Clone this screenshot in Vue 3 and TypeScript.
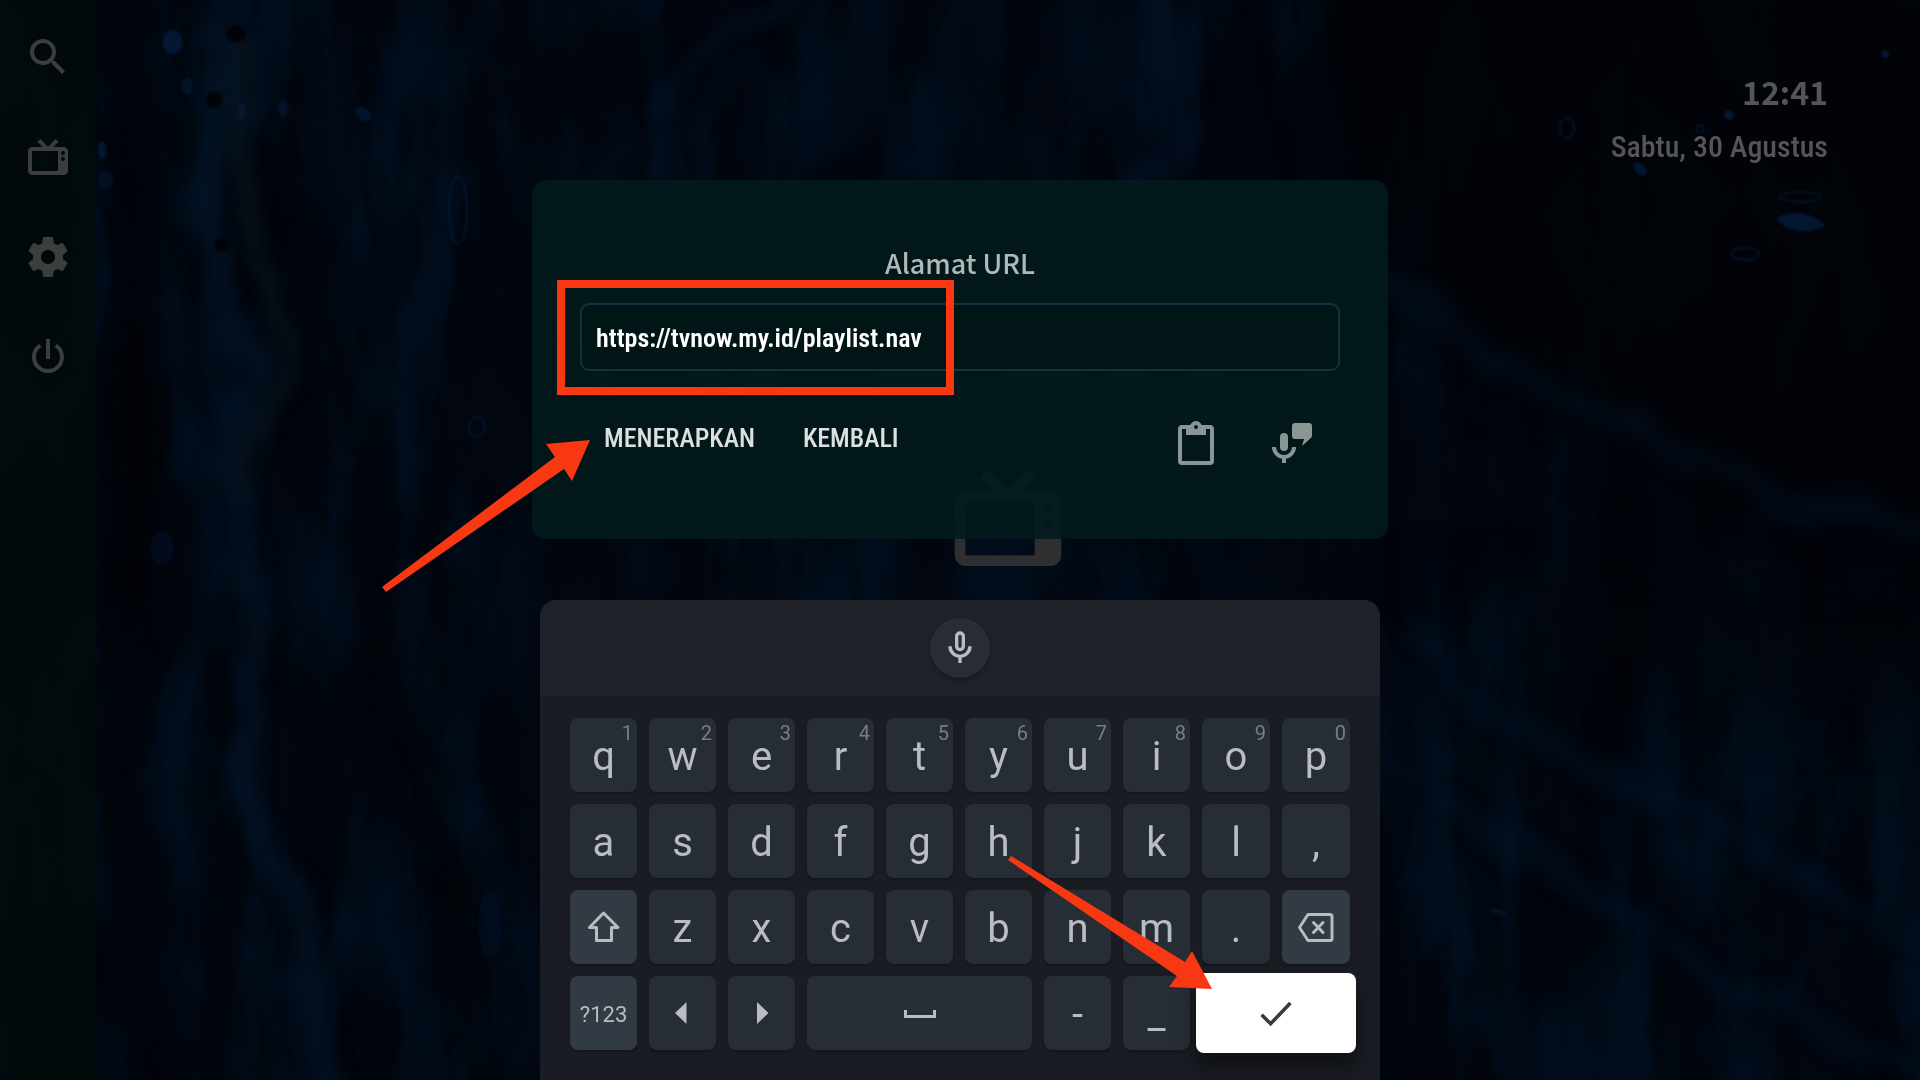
<script setup lang="ts">
import { ref } from 'vue'

interface Key {
  id: string
  label?: string
  hint?: string
  icon?: 'shift' | 'backspace' | 'left' | 'right' | 'space' | 'enter'
  name?: string
  special?: boolean
  small?: boolean
}

const url = ref('https://tvnow.my.id/playlist.nav')

const letters = (text: string): Key[] => text.split('').map((c) => ({ id: c, label: c }))

const keys: Key[] = [
  ...'qwertyuiop'.split('').map((c, i) => ({ id: c, label: c, hint: String((i + 1) % 10) })),
  ...letters('asdfghjkl,'),
  { id: 'shift', icon: 'shift', name: 'Shift', special: true },
  ...letters('zxcvbnm.'),
  { id: 'backspace', icon: 'backspace', name: 'Hapus', special: true },
  { id: 'symbols', label: '?123', special: true, small: true },
  { id: 'left', icon: 'left', name: 'Kiri' },
  { id: 'right', icon: 'right', name: 'Kanan' },
  { id: 'space', icon: 'space', name: 'Spasi' },
  { id: 'dash', label: '-' },
  { id: 'underscore', label: '_' },
  { id: 'enter', icon: 'enter', name: 'Selesai' },
]

const tvPath =
  'M8.16,3L6.75,4.41L9.34,7H4C2.89,7 2,7.89 2,9V19C2,20.11 2.89,21 4,21H20C21.11,21 22,20.11 22,19V9C22,7.89 21.11,7 20,7H14.66L17.25,4.41L15.84,3L12,6.84L8.16,3M4,9H17V19H4V9M19.5,9A1,1 0 0,1 20.5,10A1,1 0 0,1 19.5,11A1,1 0 0,1 18.5,10A1,1 0 0,1 19.5,9M19.5,12A1,1 0 0,1 20.5,13A1,1 0 0,1 19.5,14A1,1 0 0,1 18.5,13A1,1 0 0,1 19.5,12Z'

const menu = [
  {
    name: 'Cari',
    path: 'M9.5,3A6.5,6.5 0 0,1 16,9.5C16,11.11 15.41,12.59 14.44,13.73L14.71,14H15.5L20.5,19L19,20.5L14,15.5V14.71L13.73,14.44C12.59,15.41 11.11,16 9.5,16A6.5,6.5 0 0,1 3,9.5A6.5,6.5 0 0,1 9.5,3M9.5,5C7,5 5,7 5,9.5C5,12 7,14 9.5,14C12,14 14,12 14,9.5C14,7 12,5 9.5,5Z',
  },
  { name: 'TV', path: tvPath },
  {
    name: 'Pengaturan',
    path: 'M12,15.5A3.5,3.5 0 0,1 8.5,12A3.5,3.5 0 0,1 12,8.5A3.5,3.5 0 0,1 15.5,12A3.5,3.5 0 0,1 12,15.5M19.43,12.97C19.47,12.65 19.5,12.33 19.5,12C19.5,11.67 19.47,11.34 19.43,11L21.54,9.37C21.73,9.22 21.78,8.95 21.66,8.73L19.66,5.27C19.54,5.05 19.27,4.96 19.05,5.05L16.56,6.05C16.04,5.66 15.5,5.32 14.87,5.07L14.5,2.42C14.46,2.18 14.25,2 14,2H10C9.75,2 9.54,2.18 9.5,2.42L9.13,5.07C8.5,5.32 7.96,5.66 7.44,6.05L4.95,5.05C4.73,4.96 4.46,5.05 4.34,5.27L2.34,8.73C2.21,8.95 2.27,9.22 2.46,9.37L4.57,11C4.53,11.34 4.5,11.67 4.5,12C4.5,12.33 4.53,12.65 4.57,12.97L2.46,14.63C2.27,14.78 2.21,15.05 2.34,15.27L4.34,18.73C4.46,18.95 4.73,19.03 4.95,18.95L7.44,17.94C7.96,18.34 8.5,18.68 9.13,18.93L9.5,21.58C9.54,21.82 9.75,22 10,22H14C14.25,22 14.46,21.82 14.5,21.58L14.87,18.93C15.5,18.67 16.04,18.34 16.56,17.94L19.05,18.95C19.27,19.03 19.54,18.95 19.66,18.73L21.66,15.27C21.78,15.05 21.73,14.78 21.54,14.63L19.43,12.97Z',
  },
  {
    name: 'Keluar',
    path: 'M16.56,5.44L15.11,6.89C16.84,7.94 18,9.83 18,12A6,6 0 0,1 12,18A6,6 0 0,1 6,12C6,9.83 7.16,7.94 8.88,6.88L7.44,5.44C5.36,6.88 4,9.28 4,12A8,8 0 0,0 12,20A8,8 0 0,0 20,12C20,9.28 18.64,6.88 16.56,5.44M13,3H11V13H13',
  },
]
</script>

<template>
  <div class="screen">
    <svg class="wallpaper" viewBox="0 0 1920 1080" preserveAspectRatio="xMidYMid slice" aria-hidden="true">
      <defs>
        <filter id="marble" x="0" y="0" width="100%" height="100%" color-interpolation-filters="sRGB">
          <feTurbulence type="fractalNoise" baseFrequency="0.009 0.003" numOctaves="6" seed="14" />
          <feColorMatrix values="0 0 0 0 0.006  0 0 0 0 0.075  0 0 0 0 0.15  4 0 0 0 -1.5" />
        </filter>
        <filter id="veins" x="0" y="0" width="100%" height="100%" color-interpolation-filters="sRGB">
          <feTurbulence type="fractalNoise" baseFrequency="0.02 0.006" numOctaves="5" seed="5" />
          <feColorMatrix values="0 0 0 0 0.004  0 0 0 0 0.012  0 0 0 0 0.024  0 6 0 0 -2.7" />
        </filter>
        <filter id="warp" x="-10%" y="-10%" width="120%" height="120%" color-interpolation-filters="sRGB">
          <feTurbulence type="fractalNoise" baseFrequency="0.012" numOctaves="4" seed="8" />
          <feDisplacementMap in="SourceGraphic" scale="60" xChannelSelector="R" yChannelSelector="G" />
          <feGaussianBlur stdDeviation="8" />
        </filter>
        <filter id="soft" color-interpolation-filters="sRGB"><feGaussianBlur stdDeviation="1" /></filter>
        <filter id="haze" x="-20%" y="-20%" width="140%" height="140%" color-interpolation-filters="sRGB">
          <feGaussianBlur stdDeviation="30" />
        </filter>
      </defs>
      <rect width="1920" height="1080" fill="#02060f" />
      <rect width="1920" height="1080" filter="url(#marble)" opacity="0.55" />
      <rect width="1920" height="1080" filter="url(#veins)" opacity="0.5" />
      <g filter="url(#warp)" fill="none">
        <path d="M130 -20C150 200 110 330 150 480S90 700 130 840S120 1000 170 1100" stroke="#010409" stroke-width="56" opacity="0.85" />
        <path d="M225 -20C215 90 190 170 205 240S260 330 240 420S270 620 250 720S310 900 330 1100" stroke="#04162a" stroke-width="30" opacity="0.6" />
        <path d="M300 60C280 220 330 300 350 420S320 600 400 700S430 900 480 1100" stroke="#010409" stroke-width="22" opacity="0.8" />
        <path d="M245 40C230 110 240 220 275 300S240 440 250 500" stroke="#081720" stroke-width="20" opacity="0.7" />
        <path d="M780 -20C760 60 690 30 670 100" stroke="#04162c" stroke-width="10" opacity="0.7" />
        <path d="M1150 -20C1170 80 1220 160 1130 190" stroke="#04162c" stroke-width="30" opacity="0.4" />
      </g>
      <path d="M1290 -60H1980V560L1740 540L1560 420L1380 300Z" fill="#020408" opacity="0.9" filter="url(#haze)" />
      <path d="M1400 560L1980 600V740L1600 690Z" fill="#020408" opacity="0.5" filter="url(#haze)" />
      <g filter="url(#warp)" fill="none" stroke="#03152a" stroke-width="24" opacity="0.4">
        <path d="M1340 250C1430 330 1540 380 1640 430S1820 510 1940 530" />
        <path d="M1410 620C1480 740 1620 780 1760 850S1880 940 1940 960" />
        <path d="M1430 800C1530 830 1610 930 1740 990S1870 1050 1940 1080" />
      </g>
      <g fill="#052043" opacity="0.7" filter="url(#soft)">
        <path d="M1776 219C1788 209 1810 211 1826 225C1810 235 1790 234 1776 219Z" />
        <ellipse cx="1640" cy="169" rx="8" ry="5" transform="rotate(40 1640 169)" />
        <circle cx="1729" cy="115" r="5" />
        <ellipse cx="173" cy="42" rx="10" ry="12" />
        <ellipse cx="187" cy="86" rx="6" ry="9" opacity="0.7" />
        <ellipse cx="242" cy="111" rx="4" ry="9" opacity="0.7" />
        <ellipse cx="283" cy="108" rx="5" ry="8" opacity="0.7" />
        <ellipse cx="363" cy="114" rx="9" ry="6" transform="rotate(30 363 114)" opacity="0.8" />
        <ellipse cx="106" cy="180" rx="8" ry="10" opacity="0.5" />
        <ellipse cx="102" cy="150" rx="4" ry="9" />
        <ellipse cx="162" cy="548" rx="12" ry="18" opacity="0.4" />
        <ellipse cx="490" cy="925" rx="12" ry="34" opacity="0.3" />
        <ellipse cx="1498" cy="912" rx="10" ry="3" transform="rotate(20 1498 912)" opacity="0.6" />
        <circle cx="1885" cy="54" r="4" />
      </g>
      <g fill="none" stroke="#052043" stroke-width="2" opacity="0.6" filter="url(#soft)">
        <ellipse cx="458" cy="210" rx="9" ry="34" />
        <ellipse cx="477" cy="427" rx="8" ry="10" />
        <ellipse cx="1800" cy="197" rx="20" ry="5" />
        <ellipse cx="1567" cy="128" rx="7" ry="10" />
        <circle cx="1700" cy="129" r="4" />
        <ellipse cx="1745" cy="254" rx="14" ry="6" />
      </g>
      <g fill="#010306" filter="url(#soft)">
        <ellipse cx="236" cy="34" rx="10" ry="8" />
        <ellipse cx="214" cy="100" rx="8" ry="8" />
        <ellipse cx="222" cy="245" rx="8" ry="6" />
      </g>
    </svg>

    <nav class="sidebar" aria-label="Menu">
      <button v-for="item in menu" :key="item.name" class="menu-button" type="button" :aria-label="item.name">
        <svg viewBox="0 0 24 24"><path :d="item.path" fill="currentColor" fill-rule="evenodd" /></svg>
      </button>
    </nav>

    <main class="home">
      <header class="clock">
        <time class="time">12:41</time>
        <span class="date">Sabtu, 30 Agustus</span>
      </header>
      <svg class="home-logo" viewBox="0 0 24 24" aria-hidden="true">
        <path :d="tvPath" fill="currentColor" fill-rule="evenodd" />
      </svg>
    </main>

    <div class="overlay">
      <form class="dialog" @submit.prevent>
        <label class="title" for="url">Alamat URL</label>
        <div class="field">
          <input id="url" v-model="url" class="url-input" type="text" spellcheck="false" />
          <span class="highlight" aria-hidden="true"></span>
        </div>
        <div class="actions">
          <button class="text-button" type="submit">MENERAPKAN</button>
          <button class="text-button" type="button">KEMBALI</button>
          <div class="tools">
            <button class="tool" type="button" aria-label="Tempel">
              <svg viewBox="0 0 24 24">
                <path
                  fill="currentColor"
                  fill-rule="evenodd"
                  d="M19,3H14.82C14.4,1.84 13.3,1 12,1C10.7,1 9.6,1.84 9.18,3H5A2,2 0 0,0 3,5V21A2,2 0 0,0 5,23H19A2,2 0 0,0 21,21V5A2,2 0 0,0 19,3M12,3A1,1 0 0,1 13,4A1,1 0 0,1 12,5A1,1 0 0,1 11,4A1,1 0 0,1 12,3M7,8H17V5H19V21H5V5H7V8Z"
                />
              </svg>
            </button>
            <button class="tool" type="button" aria-label="Masukan suara">
              <svg viewBox="0 0 24 24">
                <path
                  fill="currentColor"
                  d="M22 4V8A2 2 0 0 1 21.6 9.4L17 13.5L18 10H13.5A1.5 1.5 0 0 1 12 8.5V3.5A1.5 1.5 0 0 1 13.5 2H20.5A1.5 1.5 0 0 1 22 3.5ZM8 7A2 2 0 0 1 10 9V14A2 2 0 0 1 6 14V9A2 2 0 0 1 8 7ZM14 14C14 17 11.8 19.4 9 19.9V22H7V19.9C4.2 19.4 2 17 2 14H4A4 4 0 0 0 12 14Z"
                />
              </svg>
            </button>
          </div>
        </div>
      </form>

      <section class="keyboard" aria-label="Papan ketik">
        <div class="suggestions">
          <button class="voice" type="button" aria-label="Ketik dengan suara">
            <svg viewBox="0 0 24 24" fill="none" stroke="currentColor" stroke-width="2">
              <rect x="10" y="3" width="4" height="10" rx="2" />
              <path d="M6 11A6 6 0 0 0 18 11M12 17V21" />
            </svg>
          </button>
        </div>
        <div class="keys">
          <button
            v-for="key in keys"
            :key="key.id"
            type="button"
            class="key"
            :class="[key.icon, { special: key.special, small: key.small }]"
            :aria-label="key.name"
          >
            <span v-if="key.label" class="glyph">{{ key.label }}</span>
            <span v-if="key.hint" class="hint">{{ key.hint }}</span>
            <svg v-if="key.icon" viewBox="0 0 40 40" fill="none" stroke="currentColor" stroke-width="3">
              <path
                v-if="key.icon === 'shift'"
                stroke-linejoin="round"
                d="M19.5 6L34 20.5H27.5V33.5H12.5V20.5H5.5Z"
              />
              <path
                v-else-if="key.icon === 'backspace'"
                stroke-linejoin="round"
                stroke-linecap="round"
                d="M12 7.5H34Q36 7.5 36 9.5V31.5Q36 33.5 34 33.5H12L3.5 20.5ZM17.5 15.5L27 25.5M27 15.5L17.5 25.5"
              />
              <path v-else-if="key.icon === 'left'" d="M23.5 9V31L12 20Z" fill="currentColor" stroke="none" />
              <path v-else-if="key.icon === 'right'" d="M15 9V31L26.5 20Z" fill="currentColor" stroke="none" />
              <path v-else-if="key.icon === 'space'" d="M5.5 17V23.5H34.5V17" />
              <path v-else d="M4 22L14 32L36 9" stroke-width="4" />
            </svg>
          </button>
        </div>
      </section>
    </div>

    <svg class="pointers" viewBox="0 0 1920 1080" preserveAspectRatio="xMidYMid slice" aria-hidden="true">
      <g fill="#f73813">
        <path d="M590 440L546 444L555 457L382 587L386 592L564 469L572 481Z" />
        <path d="M1212 989L1192 951L1185 962L1011 856L1008 860L1177 976L1169 987Z" />
      </g>
    </svg>
  </div>
</template>

<style>
body {
  background: #02060f;
}
</style>

<style scoped>
.screen {
  position: relative;
  display: flex;
  min-height: 100vh;
  overflow: hidden;
  font-family: Roboto, 'Liberation Sans', sans-serif;
}

button {
  display: flex;
  align-items: center;
  justify-content: center;
  margin: 0;
  padding: 0;
  border: 0;
  background: none;
  color: inherit;
  font: inherit;
}

.wallpaper,
.pointers {
  position: absolute;
  inset: 0;
  width: 100%;
  height: 100%;
}

.pointers {
  pointer-events: none;
}

.sidebar {
  position: relative;
  display: flex;
  flex-direction: column;
  align-items: center;
  gap: 52px;
  width: 96px;
  padding-top: 33px;
  background: rgba(1, 10, 11, 0.88);
  color: #3c3e3e;
}

.menu-button,
.menu-button svg {
  width: 48px;
  height: 48px;
}

.home {
  position: relative;
  flex: 1;
  display: flex;
  flex-direction: column;
  align-items: center;
}

.clock {
  display: flex;
  flex-direction: column;
  align-items: flex-end;
  align-self: stretch;
  gap: 8px;
  padding: 67px 92px 0 0;
  color: #555;
}

.time {
  font-family: 'Noto Sans CJK SC', 'Noto Sans', sans-serif;
  font-size: 32px;
  line-height: 48px;
  font-weight: 700;
}

.date {
  font-family: 'Roboto Condensed', Roboto, sans-serif;
  font-size: 30px;
  line-height: 48px;
  font-weight: 500;
}

.home-logo {
  position: absolute;
  top: 454px;
  width: 128px;
  height: 128px;
  color: #2f2f31;
}

.overlay {
  position: absolute;
  inset: 0;
  display: flex;
  flex-direction: column;
  align-items: center;
  justify-content: space-between;
  padding-top: 180px;
}

.dialog {
  box-sizing: border-box;
  display: flex;
  flex-direction: column;
  width: 856px;
  min-height: 359px;
  padding: 60px 48px 48px;
  border-radius: 14px;
  background: rgba(2, 26, 27, 0.88);
}

.title {
  height: 63px;
  color: #b1b8b8;
  font-family: 'Noto Sans CJK SC', 'Noto Sans', sans-serif;
  font-size: 27px;
  font-weight: 500;
  line-height: 45px;
  text-align: center;
}

.field {
  position: relative;
}

.url-input {
  box-sizing: border-box;
  display: block;
  width: 100%;
  height: 68px;
  padding: 2px 14px 0;
  border: 2px solid #123240;
  border-radius: 9px;
  outline: 0;
  background: rgba(1, 20, 22, 0.6);
  color: #fff;
  font-family: 'Roboto Condensed', Roboto, sans-serif;
  font-size: 26px;
  font-weight: 600;
}

.highlight {
  position: absolute;
  top: -23px;
  left: -23px;
  box-sizing: border-box;
  width: 397px;
  height: 115px;
  border: 8px solid #f73813;
  pointer-events: none;
}

.actions {
  display: flex;
  align-items: flex-start;
  gap: 48px;
  padding: 48px 24px 0;
}

.text-button {
  height: 38px;
  color: #dde0e0;
  font-family: 'Roboto Condensed', Roboto, sans-serif;
  font-size: 26px;
  font-weight: 500;
}

.tools {
  display: flex;
  gap: 48px;
  margin-left: auto;
  color: #8a9696;
}

.tool,
.tool svg {
  width: 48px;
  height: 48px;
}

.keyboard {
  width: 840px;
  overflow: hidden;
  border-radius: 16px 16px 0 0;
  background: #191c23;
  color: #b9bcc3;
}

.suggestions {
  display: flex;
  align-items: center;
  justify-content: center;
  height: 96px;
  background: #1e2128;
}

.voice {
  width: 60px;
  height: 60px;
  border-radius: 50%;
  background: #292c33;
  box-shadow: 0 2px 3px rgba(0, 0, 0, 0.3);
}

.voice svg {
  width: 40px;
  height: 40px;
}

.keys {
  display: grid;
  grid-template-columns: repeat(8, 67px) repeat(2, 1fr);
  grid-auto-rows: 74px;
  gap: 12px;
  padding: 22px 30px 30px;
}

.key {
  position: relative;
  border-radius: 8px;
  background: #272d34;
  box-shadow: 0 2px 2px rgba(0, 0, 0, 0.22);
  font-size: 40px;
  line-height: 44px;
}

.key svg {
  width: 40px;
  height: 40px;
}

.glyph {
  padding-top: 4px;
}

.hint {
  position: absolute;
  top: 4px;
  right: 4px;
  color: #797d85;
  font-size: 20px;
  line-height: 22px;
}

.special {
  background: #323a43;
}

.small {
  font-size: 22px;
}

.space {
  grid-column: span 3;
}

.enter {
  grid-column: span 2;
  margin: -3px -6px;
  background: #fff;
  color: #3a3c40;
  box-shadow: 0 14px 22px rgba(0, 0, 0, 0.45);
}

.enter svg {
  width: 36px;
  height: 36px;
}
</style>
